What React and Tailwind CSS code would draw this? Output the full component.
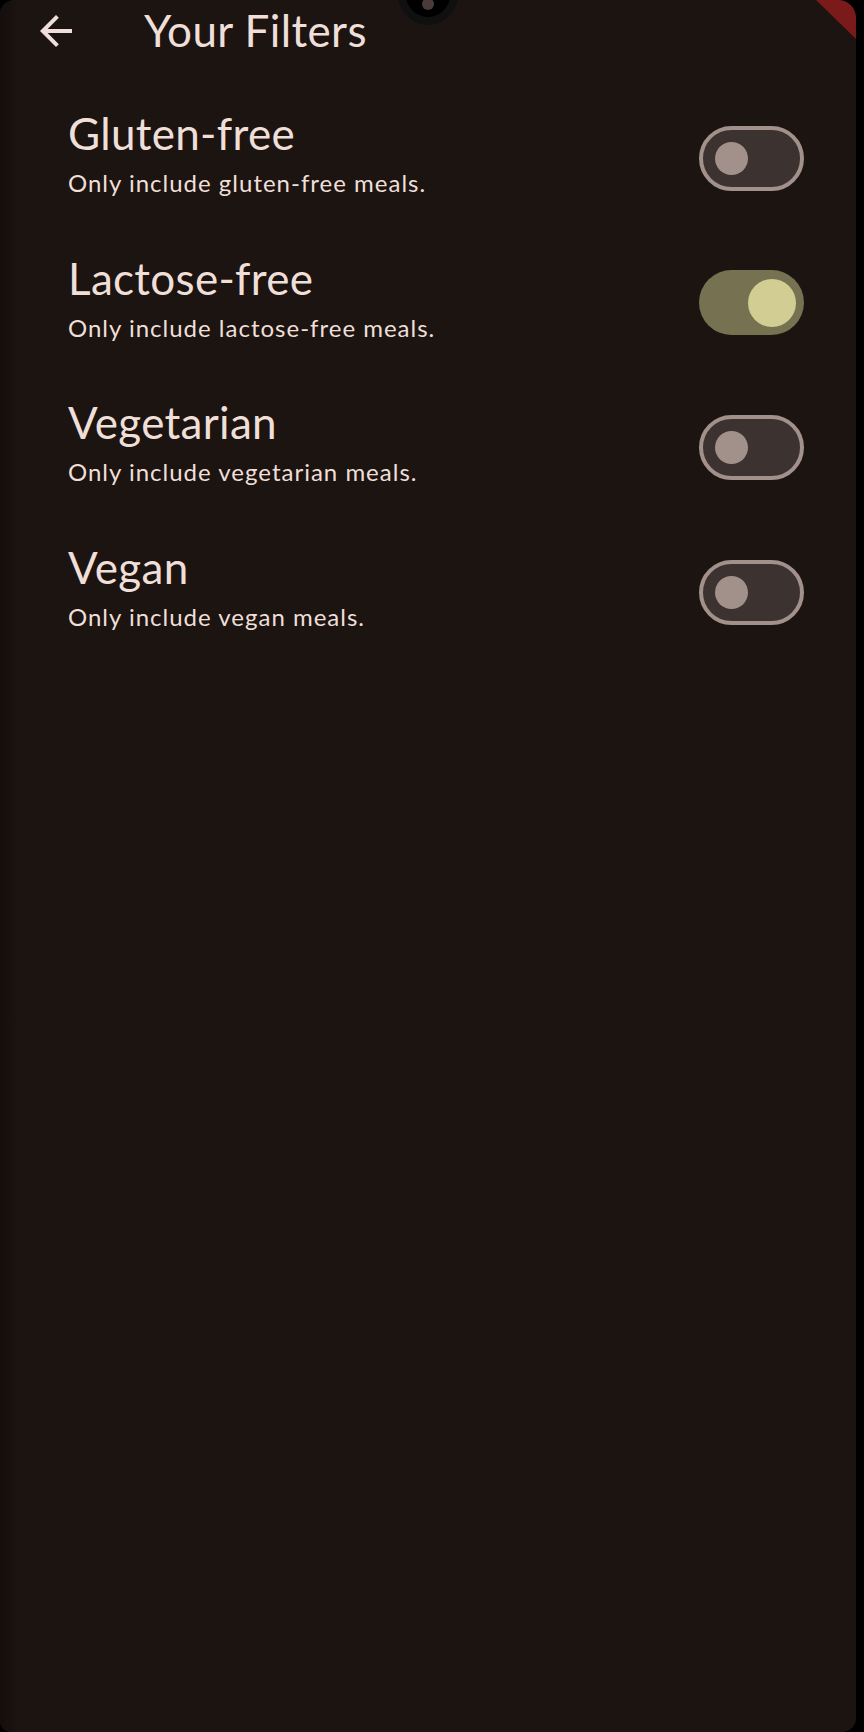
import React, { useState } from "react";

const filters = [
  { id: "gluten", title: "Gluten-free", subtitle: "Only include gluten-free meals.", on: false },
  { id: "lactose", title: "Lactose-free", subtitle: "Only include lactose-free meals.", on: true },
  { id: "vegetarian", title: "Vegetarian", subtitle: "Only include vegetarian meals.", on: false },
  { id: "vegan", title: "Vegan", subtitle: "Only include vegan meals.", on: false },
];

function Toggle({ on, onClick }) {
  if (on) {
    return (
      <button
        onClick={onClick}
        className="w-[105px] h-[65px] rounded-full bg-[#767151] flex items-center justify-end pr-[8px] shrink-0"
      >
        <span className="block w-[48px] h-[48px] rounded-full bg-[#d2cd92]" />
      </button>
    );
  }
  return (
    <button
      onClick={onClick}
      className="w-[105px] h-[65px] rounded-full bg-[#3c3330] border-[4px] border-[#a2918a] flex items-center pl-[12px] shrink-0"
    >
      <span className="block w-[33px] h-[33px] rounded-full bg-[#a2918a]" />
    </button>
  );
}

export default function App() {
  const [state, setState] = useState(
    Object.fromEntries(filters.map((f) => [f.id, f.on]))
  );

  return (
    <div className="w-[864px] h-[1732px] bg-black relative overflow-hidden font-[family-name:Lato,sans-serif]">
      <div className="w-[856px] h-full rounded-tl-[14px] rounded-tr-[18px] rounded-bl-[10px] rounded-br-[14px] bg-[linear-gradient(to_right,#140e0c,#1b1411_18px)] relative overflow-hidden">
        {/* app bar */}
        <div className="h-[62px] flex items-center">
          <button className="w-[112px] h-full flex items-center justify-center">
            <svg width="48" height="48" viewBox="0 0 24 24" fill="#efdfd8">
              <path d="M20 11H7.83l5.59-5.59L12 4l-8 8 8 8 1.41-1.41L7.83 13H20v-2z" />
            </svg>
          </button>
          <h1 className="ml-[32px] text-[44px] leading-[44px] tracking-[0.4px] text-[#efdfd8] -mt-[3px]">Your Filters</h1>
        </div>

        {/* filter list */}
        <div className="pt-[24px]">
          {filters.map((f) => (
            <div key={f.id} className="h-[144.6px] flex items-center justify-between pl-[68px] pr-[52px]">
              <div className="flex flex-col -mt-[10px]">
                <span className="text-[44px] leading-[44px] tracking-[0.3px] text-[#efdfd8]">{f.title}</span>
                <span className="mt-[16px] text-[24px] leading-[24px] tracking-[1px] text-[#efdfd8]">
                  {f.subtitle}
                </span>
              </div>
              <Toggle
                on={state[f.id]}
                onClick={() => setState((s) => ({ ...s, [f.id]: !s[f.id] }))}
              />
            </div>
          ))}
        </div>

        {/* debug ribbon corner */}
        <svg className="absolute top-0 right-0" width="40" height="40" viewBox="0 0 40 40">
          <polygon points="0,0 40,0 40,39" fill="#7a1a1a" />
        </svg>
      </div>

      {/* camera cutout */}
      <div className="absolute left-[398px] top-[-35px] w-[60px] h-[60px] rounded-full bg-[#111010] flex items-center justify-center">
        <div className="w-[44px] h-[44px] rounded-full bg-black flex items-center justify-center">
          <div className="w-[12px] h-[12px] rounded-full bg-[#4a3a3c] mt-[18px]" />
        </div>
      </div>
    </div>
  );
}
